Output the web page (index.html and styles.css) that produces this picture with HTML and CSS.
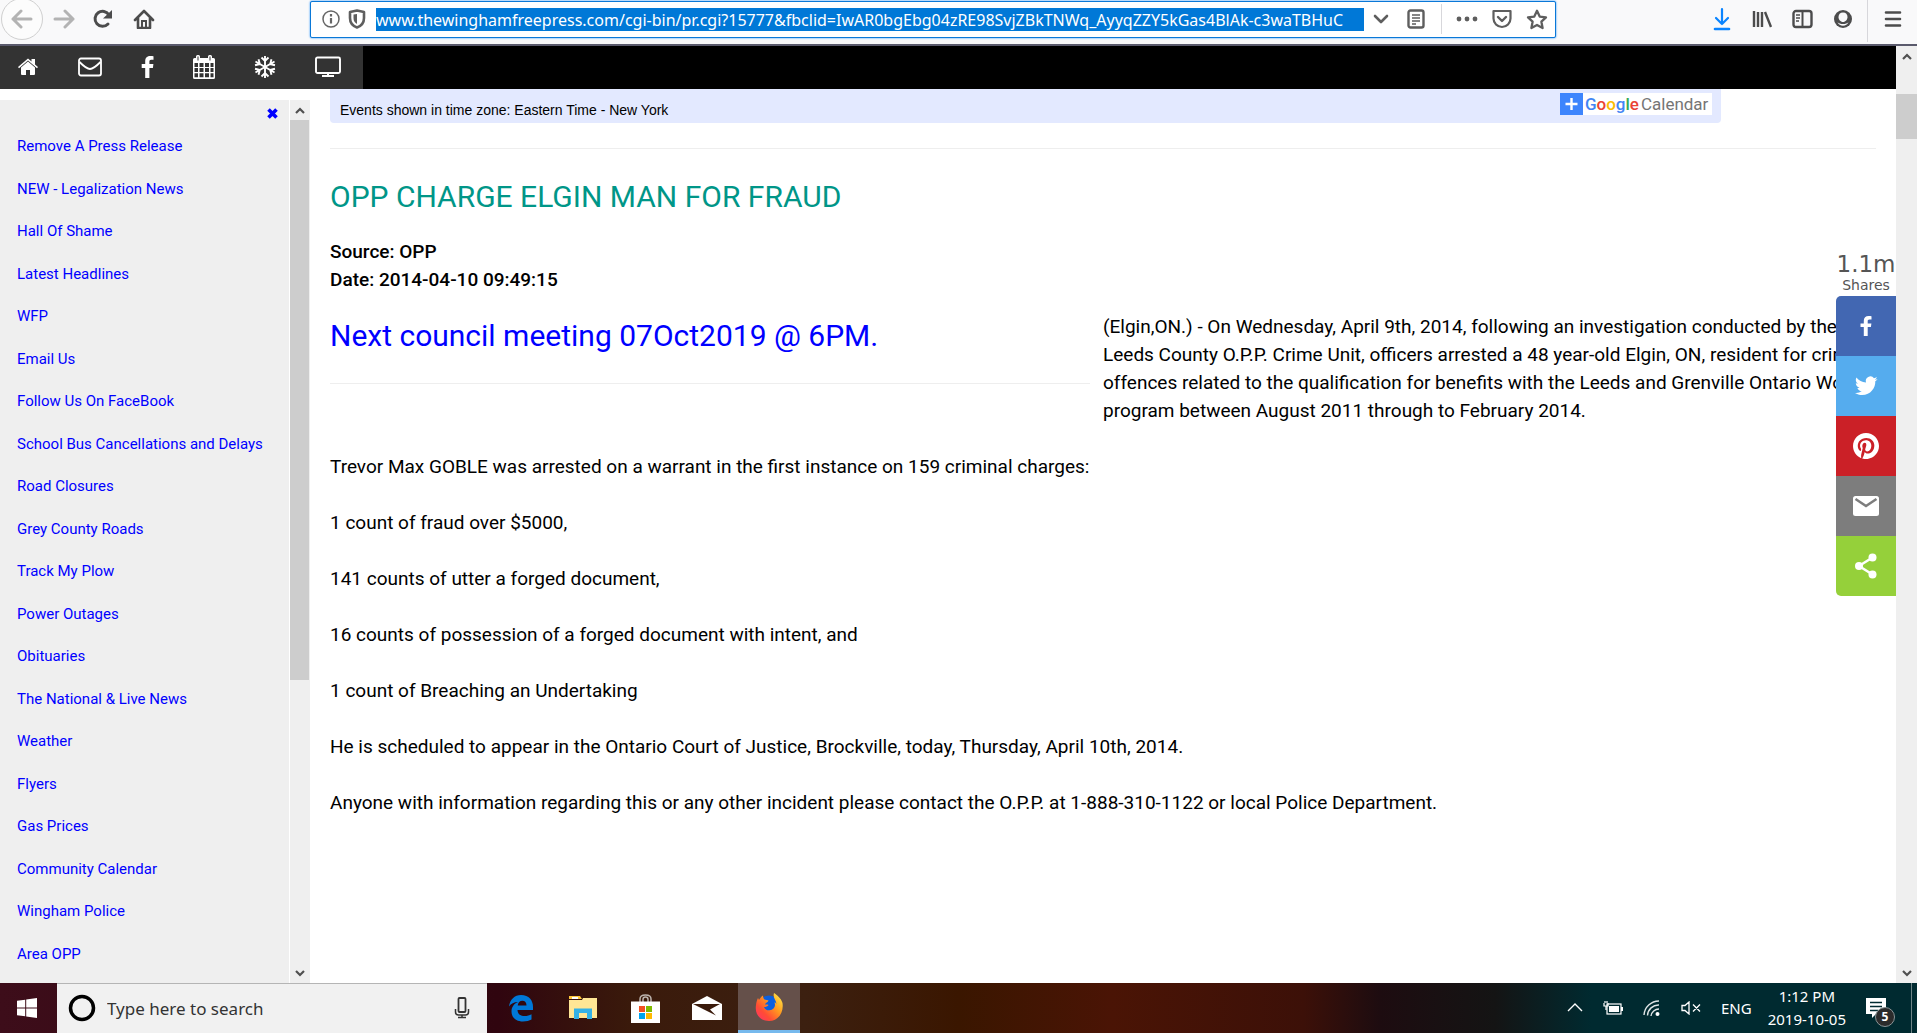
FILE: index.html
```html
<!DOCTYPE html>
<html lang="en">
<head>
    <meta charset="utf-8">
    <title>OPP CHARGE ELGIN MAN FOR FRAUD</title>
    <link rel="stylesheet" href="styles.css">
</head>
<body>
    <!-- Browser toolbar -->
    <header class="toolbar">
        <div class="toolbar-left">
            <button type="button" class="tool back" aria-label="Back"><svg width="22" height="20" viewBox="0 0 22 20"><path d="M10 2L2 10l8 8M2 10h18" fill="none" stroke="#b3b3b3" stroke-width="3" stroke-linecap="round" stroke-linejoin="round"/></svg></button>
            <button type="button" class="tool" aria-label="Forward"><svg width="22" height="20" viewBox="0 0 22 20"><path d="M12 2l8 8-8 8M20 10H2" fill="none" stroke="#b3b3b3" stroke-width="3" stroke-linecap="round" stroke-linejoin="round"/></svg></button>
            <button type="button" class="tool" aria-label="Reload"><svg width="22" height="20" viewBox="0 0 22 20"><path d="M15 15a7.500 7.500 0 1 1 1-9" fill="none" stroke="#4c4c4c" stroke-width="3" stroke-linecap="round"/><path d="M19 1v8.500h-9z" fill="#4c4c4c"/></svg></button>
            <button type="button" class="tool" aria-label="Home"><svg width="22" height="20" viewBox="0 0 22 20"><path d="M2 11l9-9 9 9M5 9v10h12V9" fill="none" stroke="#4c4c4c" stroke-width="2.600" stroke-linecap="round" stroke-linejoin="round"/><path d="M9 18v-6h4v6" fill="none" stroke="#4c4c4c" stroke-width="2"/></svg></button>
        </div>
        <div class="urlbar">
            <svg width="18" height="18" viewBox="0 0 18 18"><circle cx="9" cy="9" r="8" fill="none" stroke="#666" stroke-width="1.500"/><path d="M9 8v5.500M9 4v2.500" stroke="#666" stroke-width="2.200"/></svg>
            <svg width="18" height="20" viewBox="0 0 18 20"><path d="M9 1.500l7 1.500v6c0 5-3 8-7 9.500C5 17 2 14 2 9V3z" fill="none" stroke="#5e5e5e" stroke-width="2.600" stroke-linejoin="round"/><path d="M9 5v10c-2.500-1.500-3.500-3-3.500-6V5.500z" fill="#5e5e5e"/></svg>
            <input class="url" type="text" aria-label="Address" value="www.thewinghamfreepress.com/cgi-bin/pr.cgi?15777&amp;fbclid=IwAR0bgEbg04zRE98SvjZBkTNWq_AyyqZZY5kGas4BlAk-c3waTBHuC">
            <button type="button" class="tool drop" aria-label="History"><svg width="18" height="18" viewBox="0 0 18 18"><path d="M3 6l6 6 6-6" fill="none" stroke="#5e5e5e" stroke-width="2.600" stroke-linecap="round" stroke-linejoin="round"/></svg></button>
            <button type="button" class="tool reader" aria-label="Reader view"><svg width="18" height="20" viewBox="0 0 18 20"><rect x="1.500" y="1.500" width="15" height="17" rx="2" fill="none" stroke="#5e5e5e" stroke-width="2.400"/><path d="M5 6h8M5 9h8M5 12h8M5 15h4" stroke="#5e5e5e" stroke-width="1.400"/></svg></button>
            <button type="button" class="tool" aria-label="Page actions"><svg width="22" height="18" viewBox="0 0 22 18"><g fill="#5e5e5e"><circle cx="3" cy="9" r="2.400"/><circle cx="11" cy="9" r="2.400"/><circle cx="19" cy="9" r="2.400"/></g></svg></button>
            <button type="button" class="tool" aria-label="Save to Pocket"><svg width="20" height="20" viewBox="0 0 20 20"><path d="M1.500 2h17v7.500a8.500 8.500 0 0 1-17 0z" fill="none" stroke="#5e5e5e" stroke-width="2.200" stroke-linejoin="round"/><path d="M6 8l4 4 4-4" fill="none" stroke="#5e5e5e" stroke-width="2.400" stroke-linecap="round" stroke-linejoin="round"/></svg></button>
            <button type="button" class="tool" aria-label="Bookmark"><svg width="22" height="21" viewBox="0 0 22 21"><path d="M11 1.800l2.700 5.800 6.300.8-4.600 4.300 1.200 6.300-5.600-3.100L5.400 19l1.200-6.300L2 8.400l6.300-.8z" fill="none" stroke="#5e5e5e" stroke-width="2.300" stroke-linejoin="round"/></svg></button>
        </div>
        <div class="toolbar-right">
            <button type="button" class="tool" aria-label="Downloads"><svg width="20" height="24" viewBox="0 0 20 24"><path d="M10 2v15M4 11l6 6 6-6" fill="none" stroke="#0a84ff" stroke-width="2.200" stroke-linecap="round" stroke-linejoin="round"/><path d="M3 22h14" stroke="#0a84ff" stroke-width="2.600" stroke-linecap="round"/></svg></button>
            <button type="button" class="tool" aria-label="Library"><svg width="20" height="20" viewBox="0 0 20 20"><path d="M2 2v16M6 3v15M10 3v15M13 3l6 15" fill="none" stroke="#4c4c4c" stroke-width="2.400"/></svg></button>
            <button type="button" class="tool" aria-label="Sidebars"><svg width="21" height="20" viewBox="0 0 21 20"><rect x="1.500" y="2" width="18" height="16" rx="2.500" fill="none" stroke="#4c4c4c" stroke-width="2.400"/><path d="M10.500 2v16" stroke="#4c4c4c" stroke-width="2"/><path d="M4 6h4M4 9h4M4 12h3" stroke="#4c4c4c" stroke-width="1.400"/></svg></button>
            <button type="button" class="tool" aria-label="Account"><svg width="20" height="20" viewBox="0 0 20 20"><circle cx="10" cy="10" r="9" fill="#4c4c4c"/><path d="M10 3.500c3 0 4.500 2 4.500 4.500S12.500 13 10 13 5.500 10.500 5.500 8 7 3.500 10 3.500z" fill="#f9f9fa"/><path d="M4.500 13c2 2.800 9 2.800 11 0-1 2.500-3 3.800-5.500 3.800S5.500 15.500 4.500 13z" fill="#f9f9fa"/></svg></button>
            <button type="button" class="tool menu" aria-label="Menu"><svg width="18" height="20" viewBox="0 0 18 20"><path d="M2 3.500h14M2 10h14M2 16.500h14" stroke="#4c4c4c" stroke-width="2.600" stroke-linecap="round"/></svg></button>
        </div>
    </header>

    <div class="viewport">
        <div class="page">
            <!-- Site navigation -->
            <nav class="topnav">
                <a href="#home" aria-label="Home"><svg width="22" height="20" viewBox="0 0 22 20"><path d="M11 4.500l7 6V17q0 1-1 1h-4v-5H9v5H5q-1 0-1-1v-6.500z"/><path d="M1 10l10-8.500L14.500 4.500V2H18v5.500L21 10l-1 1.200-9-7.700-9 7.700z"/></svg></a>
                <a href="#mail" aria-label="Email"><svg width="24" height="20" viewBox="0 0 24 20"><rect x="1" y="1.500" width="22" height="17" rx="2" fill="none" stroke="#fff" stroke-width="1.800"/><path d="M1.500 5c4 4 7 7 10.500 7s6.500-3 10.500-7" fill="none" stroke="#fff" stroke-width="1.800"/></svg></a>
                <a href="#facebook" aria-label="Facebook"><svg width="13" height="22" viewBox="0 0 13 22"><path d="M12.500.2v3.500h-2.200c-1.600 0-1.900.8-1.900 1.900v2.500h4l-.5 4H8.400V22H4.200V12.100H.7v-4h3.500v-3C4.200 1.700 6.300 0 9.400 0c1.500 0 2.700.1 3.100.2z"/></svg></a>
                <a href="#calendar" aria-label="Calendar"><svg width="22" height="24" viewBox="0 0 22 24"><path fill-rule="evenodd" d="M1.500 3H3V1.500Q3 0 4.500 0h1Q7 0 7 1.500V3h8V1.500Q15 0 16.500 0h1Q19 0 19 1.500V3h1.500Q22 3 22 4.500v18q0 1.500-1.500 1.500h-19Q0 24 0 22.500v-18Q0 3 1.500 3zM1.500 8v4H5V8zm5 0v4h4V8zM12 8v4h4V8zm5.500 0v4h3V8zM1.500 13v4H5v-4zm5 0v4h4v-4zm5.500 0v4h4v-4zm5.500 0v4h3v-4zM1.500 18.200v4H5v-4zm5 0v4h4v-4zm5.500 0v4h4v-4zm5.500 0v4h3v-4zM4.500 1.500v4h1v-4zm12 0v4h1v-4z"/></svg></a>
                <a href="#weather" aria-label="Weather"><svg width="22" height="24" viewBox="0 0 22 24"><g fill="none" stroke="#fff" stroke-width="1.900"><path d="M11 1v22M7.500 2.500L11 6l3.500-3.500M7.500 21.500L11 18l3.500 3.500"/><path d="M11 1v22M7.500 2.500L11 6l3.500-3.500M7.500 21.500L11 18l3.500 3.500" transform="rotate(60 11 12)"/><path d="M11 1v22M7.500 2.500L11 6l3.500-3.500M7.500 21.500L11 18l3.500 3.500" transform="rotate(120 11 12)"/></g></svg></a>
                <a href="#live" aria-label="Live"><svg width="26" height="22" viewBox="0 0 26 22"><rect x="1" y="1.500" width="24" height="15.500" rx="1.500" fill="none" stroke="#fff" stroke-width="1.900"/><path d="M12 17h2v2h5v2H7v-2h5z"/></svg></a>
            </nav>

            <div class="columns">
                <aside class="sidebar">
                    <div class="sidebar-body">
                        <button type="button" class="close" aria-label="Close menu"><svg width="11" height="11" viewBox="0 0 11 11"><path d="M1.500 1.500l8 8M9.500 1.500l-8 8" stroke="#00f" stroke-width="3.600"/></svg></button>
                        <ul class="links">
                            <li><a href="#remove">Remove A Press Release</a></li>
                            <li><a href="#legalization">NEW - Legalization News</a></li>
                            <li><a href="#shame">Hall Of Shame</a></li>
                            <li><a href="#headlines">Latest Headlines</a></li>
                            <li><a href="#wfp">WFP</a></li>
                            <li><a href="#email">Email Us</a></li>
                            <li><a href="#follow">Follow Us On FaceBook</a></li>
                            <li><a href="#bus">School Bus Cancellations and Delays</a></li>
                            <li><a href="#roads">Road Closures</a></li>
                            <li><a href="#grey">Grey County Roads</a></li>
                            <li><a href="#plow">Track My Plow</a></li>
                            <li><a href="#power">Power Outages</a></li>
                            <li><a href="#obituaries">Obituaries</a></li>
                            <li><a href="#national">The National &amp; Live News</a></li>
                            <li><a href="#forecast">Weather</a></li>
                            <li><a href="#flyers">Flyers</a></li>
                            <li><a href="#gas">Gas Prices</a></li>
                            <li><a href="#community">Community Calendar</a></li>
                            <li><a href="#police">Wingham Police</a></li>
                            <li><a href="#opp">Area OPP</a></li>
                        </ul>
                    </div>
                    <div class="scrollbar side-scroll">
                        <svg width="12" height="20" viewBox="0 0 12 20"><path d="M2 13l4-4 4 4" fill="none" stroke="#505050" stroke-width="2.200"/></svg>
                        <div class="thumb"></div>
                        <svg class="down" width="12" height="20" viewBox="0 0 12 20"><path d="M2 8l4 4 4-4" fill="none" stroke="#505050" stroke-width="2.200"/></svg>
                    </div>
                </aside>

                <main class="content">
                    <div class="calendar-foot">
                        <span>Events shown in time zone: Eastern Time - New York</span>
                        <a class="gcal" href="#gcal"><svg width="23" height="22" viewBox="0 0 23 22"><rect width="23" height="22" fill="#3d85fd"/><path d="M11.500 5v12M5.500 11h12" stroke="#fff" stroke-width="2.400"/></svg><span class="google"><b class="g-blue">G</b><b class="g-red">o</b><b class="g-yellow">o</b><b class="g-blue">g</b><b class="g-green">l</b><b class="g-red">e</b></span><span class="cal">Calendar</span></a>
                    </div>
                    <hr class="rule">
                    <h1 class="title">OPP CHARGE ELGIN MAN FOR FRAUD</h1>
                    <p class="meta">Source: OPP<br>Date: 2014-04-10 09:49:15</p>
                    <div class="lead">
                        <div class="notice">
                            <a href="#council">Next council meeting 07Oct2019 @ 6PM.</a>
                            <hr>
                        </div>
                        <p>(Elgin,ON.) - On Wednesday, April 9th, 2014, following an investigation conducted by the Leeds County O.P.P. Crime Unit, officers arrested a 48 year-old Elgin, ON, resident for criminal offences related to the qualification for benefits with the Leeds and Grenville Ontario Works program between August 2011 through to February 2014.</p>
                    </div>
                    <p>Trevor Max GOBLE was arrested on a warrant in the first instance on 159 criminal charges:</p>
                    <p>1 count of fraud over $5000,</p>
                    <p>141 counts of utter a forged document,</p>
                    <p>16 counts of possession of a forged document with intent, and</p>
                    <p>1 count of Breaching an Undertaking</p>
                    <p>He is scheduled to appear in the Ontario Court of Justice, Brockville, today, Thursday, April 10th, 2014.</p>
                    <p>Anyone with information regarding this or any other incident please contact the O.P.P. at 1-888-310-1122 or local Police Department.</p>
                </main>
            </div>

            <!-- Share buttons float over the article -->
            <div class="share">
                <div class="count">1.1m</div>
                <div class="count-label">Shares</div>
                <a class="facebook" href="#share-facebook" aria-label="Share on Facebook"><svg width="28" height="28" viewBox="0 0 28 28"><path d="M19.500 4.200v3.300h-2c-1.500 0-1.800.7-1.800 1.800v2.200h3.700l-.5 3.600h-3.200v8.900h-3.900v-8.900H8.500v-3.600h3.300V8.700c0-3 1.800-4.700 4.800-4.700 1.400 0 2.500.1 2.900.2z"/></svg></a>
                <a class="twitter" href="#share-twitter" aria-label="Share on Twitter"><svg width="24" height="24" viewBox="0 0 24 24"><path d="M23.600 4.900c-.8.400-1.700.6-2.700.8 1-.6 1.700-1.500 2-2.600-.9.500-1.900.9-2.900 1.100a4.600 4.600 0 0 0-8 4.200C8 8.200 4.700 6.300 2.400 3.500c-1.200 2.100-.6 4.900 1.500 6.200-.8 0-1.500-.2-2.100-.6 0 2.200 1.500 4.200 3.700 4.700-.7.200-1.400.2-2.100.1.600 1.900 2.300 3.200 4.400 3.200A9.300 9.300 0 0 1 1 19c2 1.300 4.500 2.100 7.100 2.100 8.600 0 13.500-7.300 13.200-13.800.9-.7 1.700-1.500 2.300-2.400z"/></svg></a>
                <a class="pinterest" href="#share-pinterest" aria-label="Share on Pinterest"><svg width="26" height="26" viewBox="0 0 24 24"><path d="M12 0C5.400 0 0 5.400 0 12c0 5.100 3.200 9.400 7.600 11.200-.1-.9-.2-2.400 0-3.400l1.400-6s-.4-.7-.4-1.800c0-1.700 1-2.900 2.200-2.900 1 0 1.500.8 1.500 1.700 0 1-.7 2.600-1 4-.3 1.200.6 2.200 1.800 2.200 2.100 0 3.800-2.200 3.800-5.500 0-2.900-2.100-4.900-5-4.900-3.400 0-5.400 2.600-5.400 5.200 0 1 .4 2.100.9 2.700.1.100.1.200.1.400l-.3 1.400c-.1.200-.2.300-.4.200-1.500-.7-2.400-2.900-2.400-4.600 0-3.800 2.800-7.300 7.900-7.300 4.200 0 7.400 3 7.400 6.900 0 4.100-2.600 7.500-6.200 7.500-1.200 0-2.400-.6-2.700-1.400l-.8 2.900c-.3 1-1 2.300-1.500 3.100 1.100.3 2.300.5 3.500.5 6.600 0 12-5.400 12-12S18.600 0 12 0z"/></svg></a>
                <a class="email" href="#share-email" aria-label="Share by email"><svg width="26" height="22" viewBox="0 0 26 22"><rect y="1" width="26" height="20" rx="2.500"/><path d="M2.500 4L13 11l10.500-7" fill="none" stroke="#7d7d7d" stroke-width="2.500"/></svg></a>
                <a class="sharethis" href="#share-more" aria-label="More"><svg width="24" height="26" viewBox="0 0 24 26"><path d="M18.500 4.500L5 13l13.500 8.500" fill="none" stroke="#fff" stroke-width="2.500"/><circle cx="18.500" cy="4.500" r="4"/><circle cx="5" cy="13" r="4"/><circle cx="18.500" cy="21.500" r="4"/></svg></a>
            </div>
        </div>
        <div class="scrollbar page-scroll">
            <svg width="12" height="20" viewBox="0 0 12 20"><path d="M2 13l4-4 4 4" fill="none" stroke="#505050" stroke-width="2.200"/></svg>
            <div class="thumb"></div>
            <svg class="down" width="12" height="20" viewBox="0 0 12 20"><path d="M2 8l4 4 4-4" fill="none" stroke="#505050" stroke-width="2.200"/></svg>
        </div>
    </div>

    <!-- Windows taskbar -->
    <footer class="taskbar">
        <button type="button" class="start" aria-label="Start"><svg width="20" height="20" viewBox="0 0 20 20"><path fill="#fff" d="M0 2.800l8.200-1.100v7.800H0zM9.200 1.500L20 0v9.500H9.200zM0 10.500h8.200v7.800L0 17.200zM9.200 10.500H20V20L9.200 18.500z"/></svg></button>
        <div class="search">
            <svg width="28" height="28" viewBox="0 0 28 28"><circle cx="14" cy="14" r="11.500" fill="none" stroke="#000" stroke-width="3.500"/></svg>
            <input type="text" aria-label="Search" placeholder="Type here to search">
            <button type="button" class="tool" aria-label="Dictate"><svg width="16" height="22" viewBox="0 0 16 22"><rect x="4.500" y="1" width="7" height="14" rx="1" fill="none" stroke="#333" stroke-width="1.800"/><path d="M1.500 12v3q0 3 3 3h7q3 0 3-3v-3M8 18v3M4 20.500h8" fill="none" stroke="#333" stroke-width="1.500"/></svg></button>
        </div>
        <div class="apps">
            <button type="button" aria-label="Edge"><svg width="26" height="28" viewBox="0 0 26 28"><path fill="#0078d7" d="M1 12.500C2 5.500 6.500 1 13 1c8 0 12 5.500 12 12v3H9.500c.2 4.500 3.500 6 7 6 2.800 0 5-.7 7-1.800v5.300C21.300 26.700 18.500 27.500 15 27.500 8 27.500 3.500 23.500 3.500 17.500c0-4.500 2.500-7.700 6.500-9.500C6 8 3 9.500 1 12.500zM9.700 11.500h8.800c0-3-1.500-4.800-4.200-4.800-2.500 0-4.200 2-4.600 4.800z"/></svg></button>
            <button type="button" aria-label="File Explorer"><svg width="28" height="24" viewBox="0 0 28 24"><path fill="#ffc83d" d="M0 0h11l2 3H0z"/><path fill="#fff" d="M3 1h6v2H3z"/><path fill="#ffe695" d="M0 4h13l1-2h14v20H0z"/><path fill="#34b1e6" d="M5 12.500h18V23h-5v-6h-8v6H5z"/></svg></button>
            <button type="button" aria-label="Store"><svg width="29" height="29" viewBox="0 0 29 29"><path d="M9 8V5q0-4 5.500-4T20 5v3M12 8V5.500Q12 3 14.500 3T17 5.500V8" fill="none" stroke="#bdb4ae" stroke-width="1.500"/><rect y="7.500" width="29" height="21.500" fill="#fff"/><path fill="#f25022" d="M8 12h6v6H8z"/><path fill="#7fba00" d="M15 12h6v6h-6z"/><path fill="#00a4ef" d="M8 19h6v6H8z"/><path fill="#ffb900" d="M15 19h6v6h-6z"/></svg></button>
            <button type="button" aria-label="Mail"><svg width="30" height="24" viewBox="0 0 30 24"><path fill="#fff" d="M0 8L15 0l15 8v16H0z"/><path fill="#3a1a0b" d="M1 8h27L18 13.500 24 19.500z"/></svg></button>
            <button type="button" class="active" aria-label="Firefox"><svg width="28" height="28" viewBox="0 0 28 28"><defs><linearGradient id="fox" x1="1" y1="0" x2="0" y2="1"><stop offset="0" stop-color="#fff44f"/><stop offset=".4" stop-color="#ff9a1f"/><stop offset=".7" stop-color="#ff4c35"/><stop offset="1" stop-color="#ff2f6e"/></linearGradient></defs><circle cx="14" cy="12.500" r="10" fill="#0a5fe0"/><path fill="url(#fox)" d="M19 0c3 2 7 5 8.500 10C29 20 23 28 14 28S-.5 21 1 12C1.300 9 2 7 3 5l1 2c1-1.800 2.500-3.500 4-4.500C8 4 8.500 5.500 9.500 6.500l4 1c-.5 2-3 2-3.500 4 1.500 0 2-.3 3.500.5-1 1.500-2.500 2-4.500 2 1 2.500 3 3.500 5.500 3.300C19 17 21 13 19.500 9.500c1 0 1.500.7 2 1.500C21 7 17.500 5 19 0z"/></svg></button>
        </div>
        <div class="tray">
            <svg width="16" height="9" viewBox="0 0 16 9"><path d="M1 8l7-7 7 7" fill="none" stroke="#fff" stroke-width="1.400"/></svg>
            <svg width="20" height="14" viewBox="0 0 20 14"><rect x="4" y="3" width="14" height="10" fill="none" stroke="#fff" stroke-width="1.200"/><path fill="#fff" d="M6 5h10v6H6zM18 6h2v4h-2z"/><path d="M1 2v3h4V2M2 0v2M4 0v2M3 5v4" fill="none" stroke="#fff" stroke-width="1.200"/></svg>
            <svg width="18" height="18" viewBox="0 0 18 18"><g fill="none" stroke="#dfe5e6" stroke-width="1.400"><path d="M1 16A15 15 0 0 1 16 2"/><path d="M4.500 16.500A11 11 0 0 1 16 6"/><path d="M8 17a8 8 0 0 1 8-7"/></g><circle cx="14.500" cy="15" r="2" fill="#fff"/></svg>
            <svg width="20" height="14" viewBox="0 0 20 14"><path d="M1 4.500h3L8 1v12L4 9.500H1zM12 3.500l7 7M19 3.500l-7 7" fill="none" stroke="#fff" stroke-width="1.300"/></svg>
            <span>ENG</span>
            <div class="clock">1:12 PM<br>2019-10-05</div>
            <div class="action">
                <svg width="20" height="20" viewBox="0 0 20 20"><path fill="#fff" d="M0 0h20v16H10l-4 4v-4H0z"/><path d="M4 4.500h12M4 8.500h12M4 12.500h8" stroke="#002a30" stroke-width="1.300"/></svg>
                <span class="badge">5</span>
            </div>
        </div>
    </footer>
</body>
</html>
```
FILE: styles.css
```css
/* General styles */
* {
    box-sizing: border-box;
}

body {
    font-family: Roboto, sans-serif;
    font-size: 19px;
    line-height: 28px;
    color: #000;
    background-color: #fff;
    margin: 0;
    height: 100vh;
    display: flex;
    flex-direction: column;
    overflow: hidden;
}

a {
    color: #00f;
    text-decoration: none;
}

button {
    background: none;
    border: none;
    padding: 0;
    display: flex;
    align-items: center;
    justify-content: center;
}

svg {
    display: block;
    flex: none;
}

/* Browser toolbar */
.toolbar {
    flex: none;
    height: 46px;
    background-color: #f9f9fa;
    border-bottom: 2px solid #5a5a6c;
    display: flex;
    align-items: center;
    justify-content: space-between;
    padding: 0 15px 6px 1px;
}

.toolbar-left {
    width: 309px;
    display: flex;
    align-items: center;
    gap: 18px;
}

.back {
    width: 42px;
    height: 42px;
    background-color: #fcfcfc;
    border: 1px solid #d0d0d0;
    border-radius: 50%;
}

.toolbar-left .back + .tool {
    margin-left: -8px;
}

.urlbar {
    flex: 1;
    max-width: 1246px;
    height: 37px;
    background-color: #fff;
    border: 1px solid #0a78d7;
    border-radius: 2px;
    box-shadow: 0 0 2px #0a84ff;
    display: flex;
    align-items: center;
    gap: 8px;
    padding: 0 5px 0 11px;
}

.url {
    flex: 1;
    min-width: 0;
    height: 23px;
    border: none;
    padding: 2px 0 0;
    margin-left: 2px;
    background-color: #0078d7;
    color: #fff;
    font-family: "Noto Sans", sans-serif;
    font-size: 16px;
}

.urlbar .tool {
    min-width: 27px;
}

.urlbar .drop {
    min-width: 18px;
    margin-right: 9px;
}

.reader {
    padding-right: 16px;
    border-right: 1px solid #d7d7db;
    margin-right: 3px;
    height: 30px;
}

.toolbar-right {
    margin-left: auto;
    display: flex;
    align-items: center;
    gap: 20px;
}

.menu {
    height: 46px;
    padding-left: 16px;
    margin-left: -6px;
    border-left: 1px solid #d7d7db;
}

/* Page area */
.viewport {
    flex: 1;
    min-height: 0;
    display: flex;
}

.page {
    flex: 1;
    min-width: 0;
    display: flex;
    flex-direction: column;
    position: relative;
}

.topnav {
    flex: none;
    height: 43px;
    background-color: #000;
    display: flex;
}

.topnav a {
    background-color: #333;
    padding: 0 22px 2px 17px;
    display: flex;
    align-items: center;
}

.topnav svg {
    fill: #fff;
}

.columns {
    flex: 1;
    min-height: 0;
    display: flex;
}

/* Sidebar */
.sidebar {
    flex: none;
    width: 310px;
    margin-top: 11px;
    display: flex;
    gap: 1px;
    overflow: hidden;
    font-size: 15px;
}

.sidebar-body {
    flex: 1;
    background-color: #efefef;
}

.close {
    margin: 8px 11px 6px auto;
    height: 11px;
}

.links {
    list-style: none;
    margin: 0;
    padding: 0;
    line-height: 1.5;
}

.links a {
    display: block;
    padding: 10px 17px;
}

/* Scrollbars */
.scrollbar {
    flex: none;
    width: 20px;
    background-color: #efefef;
    display: flex;
    flex-direction: column;
    align-items: center;
}

.thumb {
    width: 100%;
    background-color: #cdcdcd;
}

.side-scroll .thumb {
    height: 560px;
    border-right: 1px solid #efefef;
}

.page-scroll {
    width: 21px;
}

.page-scroll .thumb {
    height: 45px;
    margin-top: 28px;
}

.down {
    margin-top: auto;
}

/* Article */
.content {
    flex: 1;
    min-width: 0;
    padding: 0 20px;
}

.content p {
    margin: 0 0 28px;
}

.calendar-foot {
    width: 90%;
    height: 34px;
    background-color: #e3e9ff;
    border-radius: 0 0 4px 4px;
    display: flex;
    align-items: center;
    justify-content: space-between;
    padding: 0 9px 0 10px;
    font-family: "Liberation Sans", Arial, sans-serif;
    font-size: 14px;
}

.calendar-foot > span {
    padding-top: 8px;
}

.gcal {
    height: 22px;
    margin-bottom: 4px;
    background-color: #fff;
    display: flex;
    align-items: center;
    gap: 2px;
    padding-right: 4px;
    font-family: Roboto, sans-serif;
    font-size: 17px;
    color: #757575;
}

.google b {
    font-weight: 500;
}

.g-blue {
    color: #4285f4;
}

.g-red {
    color: #ea4335;
}

.g-yellow {
    color: #fbbc05;
}

.g-green {
    color: #34a853;
}

hr {
    margin: 25px 0;
    border: none;
    border-top: 1px solid #eee;
}

.title {
    margin: 0 0 19px;
    font-size: 30px;
    font-weight: 400;
    line-height: 45px;
    color: #009688;
}

.content .meta {
    margin-bottom: 19px;
    font-weight: 500;
}

/* The text column runs a little past the page margin */
.lead {
    display: grid;
    grid-template-columns: 760px 1fr;
    gap: 13px;
    margin-right: -12px;
}

.notice a {
    display: block;
    font-size: 30px;
    line-height: 45px;
}

/* Share buttons */
.share {
    position: absolute;
    top: 204px;
    right: 0;
    width: 60px;
    font-family: "DejaVu Sans", Verdana, sans-serif;
    color: #555;
    text-align: center;
}

.count {
    font-size: 23px;
    line-height: 28px;
}

.count-label {
    font-size: 14px;
    line-height: 14px;
    padding-bottom: 4px;
}

.share a {
    height: 60px;
    display: flex;
    align-items: center;
    justify-content: center;
}

.share svg {
    fill: #fff;
}

.facebook {
    background-color: #4267b2;
    border-top-left-radius: 5px;
}

.twitter {
    background-color: #55acee;
}

.pinterest {
    background-color: #cb2027;
}

.email {
    background-color: #7d7d7d;
}

.sharethis {
    background-color: #95d03a;
    border-bottom-left-radius: 5px;
}

/* Taskbar */
.taskbar {
    flex: none;
    height: 50px;
    background: linear-gradient(90deg, #3d0d1a 0, #30050f 26%, #3a1a0b 33%, #3c2010 42%, #3a1600 50%, #4a1405 58%, #3c1008 68%, #1d0c10 72%, #141414 78%, #002a30 83%);
    display: flex;
    font-family: "Noto Sans", sans-serif;
    color: #fff;
}

.start {
    width: 57px;
    padding-right: 3px;
}

.search {
    width: 430px;
    background-color: #f1f1f1;
    border-top: 1px solid #b5b5b5;
    display: flex;
    align-items: center;
    gap: 11px;
    padding: 0 17px 1px 11px;
}

.search input {
    flex: 1;
    min-width: 0;
    border: none;
    background: none;
    padding: 0;
    font-family: inherit;
    font-size: 17px;
}

.search input::placeholder {
    color: #333;
}

.apps {
    display: flex;
    padding-left: 3px;
}

.apps button {
    width: 62px;
}

.apps .active {
    background-color: #65504a;
    border-bottom: 3px solid #76b9ed;
}

.tray {
    margin: 0 5px 0 auto;
    display: flex;
    align-items: center;
    gap: 20px;
    padding: 0 25px 1px 0;
    border-right: 1px solid #6f8487;
    font-size: 15px;
}

.clock {
    margin-left: -4px;
    text-align: center;
    line-height: 23px;
}

.action {
    position: relative;
}

.badge {
    position: absolute;
    left: 9px;
    top: 9px;
    width: 20px;
    height: 20px;
    border: 1px solid #8a9496;
    border-radius: 50%;
    background-color: #2b2b2b;
    font-size: 12px;
    font-weight: 700;
    line-height: 18px;
    text-align: center;
}
```
